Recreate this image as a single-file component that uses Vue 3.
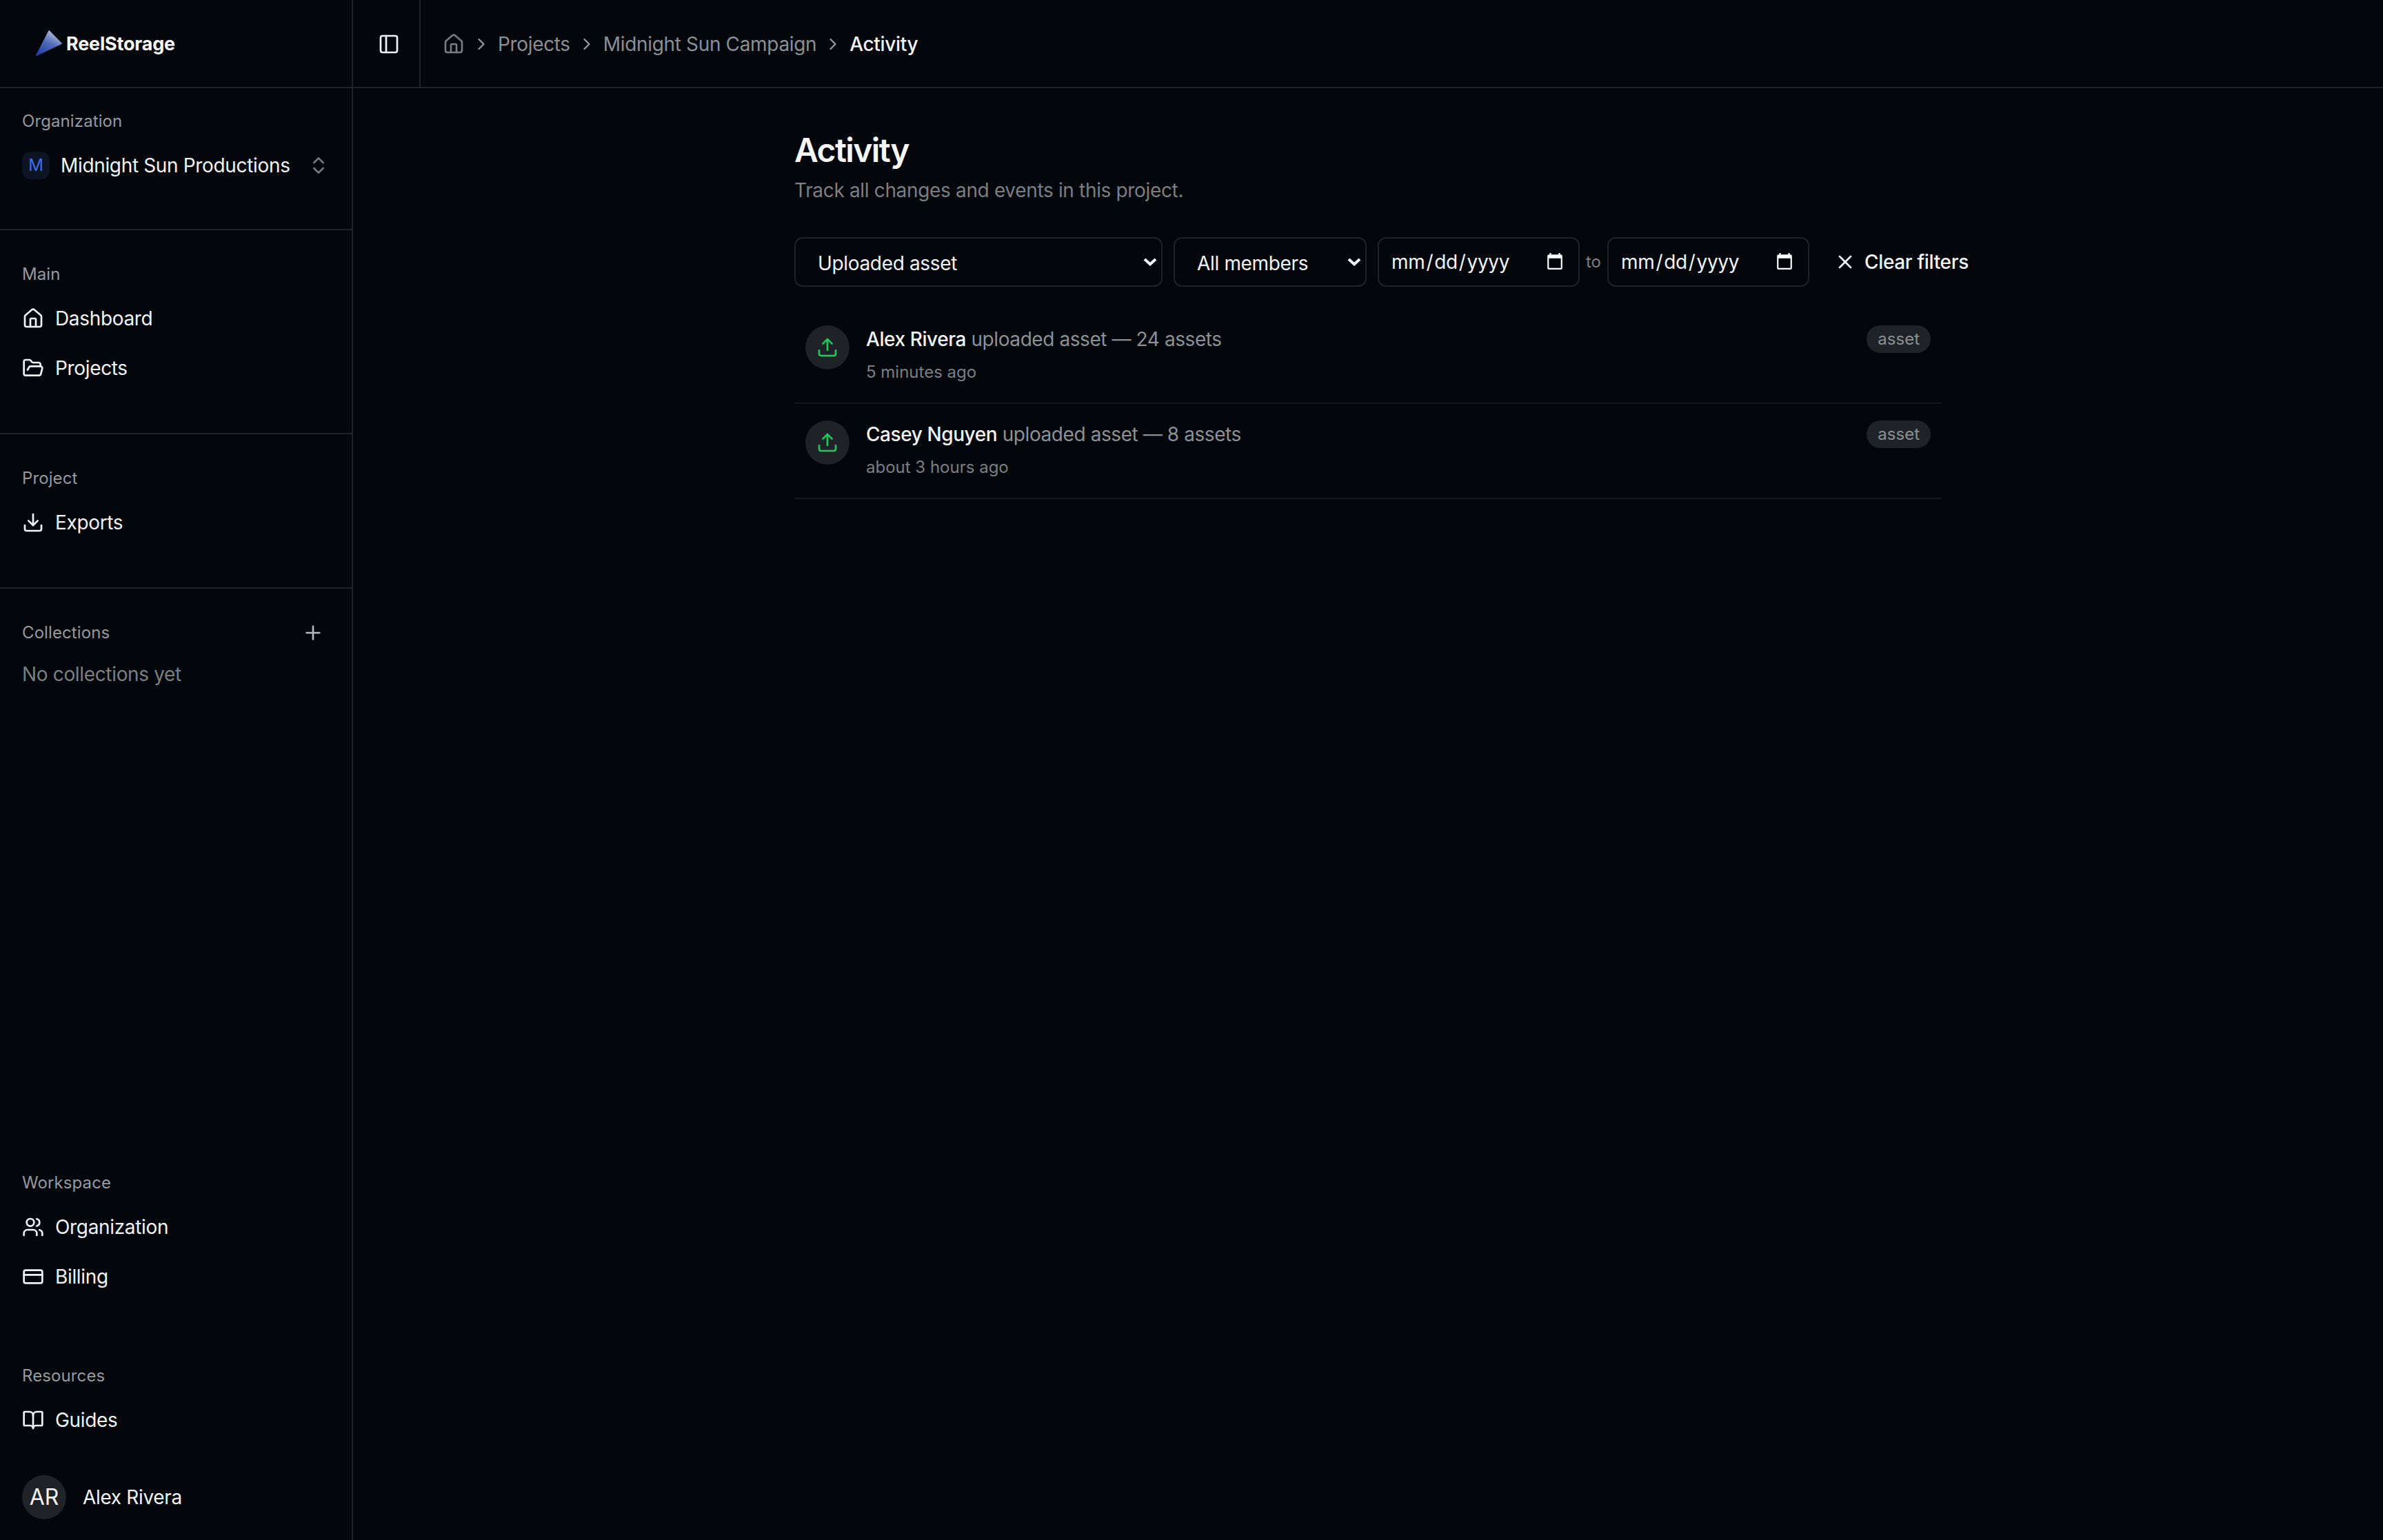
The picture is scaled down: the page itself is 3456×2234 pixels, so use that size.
<script setup>
const icons = {
  house: ['M15 21v-8a1 1 0 0 0-1-1h-4a1 1 0 0 0-1 1v8', 'M3 10a2 2 0 0 1 .709-1.528l7-5.999a2 2 0 0 1 2.582 0l7 5.999A2 2 0 0 1 21 10v9a2 2 0 0 1-2 2H5a2 2 0 0 1-2-2z'],
  folder: ['m6 14 1.5-2.9A2 2 0 0 1 9.24 10H20a2 2 0 0 1 1.94 2.5l-1.54 6a2 2 0 0 1-1.95 1.5H4a2 2 0 0 1-2-2V5a2 2 0 0 1 2-2h3.9a2 2 0 0 1 1.69.9l.81 1.2a2 2 0 0 0 1.67.9H18a2 2 0 0 1 2 2v2'],
  download: ['M12 15V3', 'M21 15v4a2 2 0 0 1-2 2H5a2 2 0 0 1-2-2v-4', 'm7 10 5 5 5-5'],
  upload: ['M12 3v12', 'm17 8-5-5-5 5', 'M21 15v4a2 2 0 0 1-2 2H5a2 2 0 0 1-2-2v-4'],
  users: ['M16 21v-2a4 4 0 0 0-4-4H6a4 4 0 0 0-4 4v2', 'M16 3.128a4 4 0 0 1 0 7.744', 'M22 21v-2a4 4 0 0 0-3-3.87', 'M5 7a4 4 0 1 0 8 0a4 4 0 1 0-8 0'],
  card: ['M4 5h16a2 2 0 0 1 2 2v10a2 2 0 0 1-2 2H4a2 2 0 0 1-2-2V7a2 2 0 0 1 2-2z', 'M2 10h20'],
  book: ['M12 7v14', 'M3 18a1 1 0 0 1-1-1V4a1 1 0 0 1 1-1h5a4 4 0 0 1 4 4 4 4 0 0 1 4-4h5a1 1 0 0 1 1 1v13a1 1 0 0 1-1 1h-6a3 3 0 0 0-3 3 3 3 0 0 0-3-3z'],
  plus: ['M5 12h14', 'M12 5v14'],
  panel: ['M5 3h14a2 2 0 0 1 2 2v14a2 2 0 0 1-2 2H5a2 2 0 0 1-2-2V5a2 2 0 0 1 2-2z', 'M9 3v18'],
  chevron: ['m9 18 6-6-6-6'],
  updown: ['m7 15 5 5 5-5', 'm7 9 5-5 5 5'],
  x: ['M18 6 6 18', 'm6 6 12 12'],
}

const topSections = [
  { label: 'Main', items: [{ icon: 'house', text: 'Dashboard' }, { icon: 'folder', text: 'Projects' }] },
  { label: 'Project', items: [{ icon: 'download', text: 'Exports' }] },
]
const bottomSections = [
  { label: 'Workspace', items: [{ icon: 'users', text: 'Organization' }, { icon: 'card', text: 'Billing' }] },
  { label: 'Resources', items: [{ icon: 'book', text: 'Guides' }] },
]
const crumbs = ['Projects', 'Midnight Sun Campaign']
const events = [
  { name: 'Alex Rivera', action: 'uploaded asset — 24 assets', time: '5 minutes ago' },
  { name: 'Casey Nguyen', action: 'uploaded asset — 8 assets', time: 'about 3 hours ago' },
]
</script>

<template>
  <div class="app">
    <aside class="sidebar">
      <div class="brand">
        <svg class="logo" viewBox="0 0 22 22">
          <defs>
            <linearGradient id="logoFill" x1="0.72" y1="0" x2="0.2" y2="1">
              <stop offset="0" stop-color="#b4c0de" />
              <stop offset="0.5" stop-color="#4f69b8" />
              <stop offset="1" stop-color="#2440a6" />
            </linearGradient>
          </defs>
          <polygon points="11.6,1.6 20.4,10.6 2.6,19" fill="url(#logoFill)" stroke="url(#logoFill)" stroke-width="1" stroke-linejoin="round" />
        </svg>
        <span class="brand-name">ReelStorage</span>
      </div>

      <section class="org-section">
        <div class="label">Organization</div>
        <div class="org-row">
          <span class="org-badge">M</span>
          <span class="org-name">Midnight Sun Productions</span>
          <svg class="icon updown" viewBox="0 0 24 24"><path v-for="d in icons.updown" :key="d" :d="d" /></svg>
        </div>
      </section>

      <section v-for="s in topSections" :key="s.label" class="nav-section">
        <div class="label">{{ s.label }}</div>
        <div class="nav-list">
          <a v-for="i in s.items" :key="i.text" class="nav-item">
            <svg class="icon" viewBox="0 0 24 24"><path v-for="d in icons[i.icon]" :key="d" :d="d" /></svg>
            {{ i.text }}
          </a>
        </div>
      </section>

      <section class="collections">
        <div class="collections-head">
          <div class="label">Collections</div>
          <svg class="icon plus" viewBox="0 0 24 24"><path v-for="d in icons.plus" :key="d" :d="d" /></svg>
        </div>
        <div class="empty">No collections yet</div>
      </section>

      <section v-for="s in bottomSections" :key="s.label" class="foot-section">
        <div class="label">{{ s.label }}</div>
        <div class="nav-list">
          <a v-for="i in s.items" :key="i.text" class="nav-item">
            <svg class="icon" viewBox="0 0 24 24"><path v-for="d in icons[i.icon]" :key="d" :d="d" /></svg>
            {{ i.text }}
          </a>
        </div>
      </section>

      <div class="user">
        <span class="avatar">AR</span>
        <span class="user-name">Alex Rivera</span>
      </div>
    </aside>

    <div class="main">
      <header class="topbar">
        <button class="toggle">
          <svg class="icon" viewBox="0 0 24 24"><path v-for="d in icons.panel" :key="d" :d="d" /></svg>
        </button>
        <nav class="crumbs">
          <svg class="icon home" viewBox="0 0 24 24"><path v-for="d in icons.house" :key="d" :d="d" /></svg>
          <template v-for="c in crumbs" :key="c">
            <svg class="icon sep" viewBox="0 0 24 24"><path v-for="d in icons.chevron" :key="d" :d="d" /></svg>
            <span>{{ c }}</span>
          </template>
          <svg class="icon sep" viewBox="0 0 24 24"><path v-for="d in icons.chevron" :key="d" :d="d" /></svg>
          <span class="current">Activity</span>
        </nav>
      </header>

      <main class="content">
        <h1>Activity</h1>
        <p class="sub">Track all changes and events in this project.</p>

        <div class="filters">
          <select class="field sel-type">
            <option>Uploaded asset</option>
          </select>
          <select class="field sel-member">
            <option>All members</option>
          </select>
          <input class="field date" type="date" />
          <span class="to">to</span>
          <input class="field date" type="date" />
          <button class="clear">
            <svg class="icon" viewBox="0 0 24 24"><path v-for="d in icons.x" :key="d" :d="d" /></svg>
            Clear filters
          </button>
        </div>

        <ul class="events">
          <li v-for="e in events" :key="e.name" class="event">
            <span class="event-icon">
              <svg class="icon" viewBox="0 0 24 24"><path v-for="d in icons.upload" :key="d" :d="d" /></svg>
            </span>
            <div class="event-body">
              <div class="event-title"><strong>{{ e.name }}</strong> {{ e.action }}</div>
              <div class="event-time">{{ e.time }}</div>
            </div>
            <span class="tag">asset</span>
          </li>
        </ul>
      </main>
    </div>
  </div>
</template>

<style>
html, body { margin: 0; background: #03060a; }
</style>

<style scoped>
.app {
  zoom: 2;
  display: flex;
  height: 1117px;
  overflow: hidden;
  background: #03060a;
  color: #f1f3f6;
  font-family: Inter, "Liberation Sans", sans-serif;
  font-size: 14px;
  line-height: 20px;
  letter-spacing: -0.17px;
  color-scheme: dark;
}
.icon {
  width: 16px;
  height: 16px;
  flex: none;
  fill: none;
  stroke: currentColor;
  stroke-width: 2;
  stroke-linecap: round;
  stroke-linejoin: round;
}
.sidebar {
  width: 256px;
  flex: none;
  box-sizing: border-box;
  display: flex;
  flex-direction: column;
  border-right: 1px solid #1f2328;
}
.brand {
  height: 64px;
  flex: none;
  box-sizing: border-box;
  display: flex;
  align-items: center;
  padding: 1px 0 0 24px;
  gap: 2px;
  border-bottom: 1px solid #1f2328;
}
.logo { width: 22px; height: 22px; flex: none; }
.brand-name { font-size: 13.5px; font-weight: 700; letter-spacing: -0.1px; color: #f8f9fb; }
.label {
  font-size: 12px;
  line-height: 16px;
  font-weight: 400;
  letter-spacing: 0.05px;
  color: #96999e;
}
.org-section {
  height: 103px;
  flex: none;
  box-sizing: border-box;
  padding: 16px 16px 0;
  border-bottom: 1px solid #1f2328;
}
.org-row {
  display: flex;
  align-items: center;
  gap: 8px;
  margin-top: 14px;
  height: 20px;
}
.org-badge {
  width: 20px;
  height: 20px;
  flex: none;
  border-radius: 6px;
  background: #0c1424;
  color: #3f6fe6;
  font-size: 12px;
  letter-spacing: 0;
  display: flex;
  align-items: center;
  justify-content: center;
}
.org-name { flex: 1; white-space: nowrap; }
.updown { color: #777a80; }
.nav-section {
  padding: 24px 16px 31px;
  border-bottom: 1px solid #1f2328;
}
.nav-list {
  display: flex;
  flex-direction: column;
  gap: 4px;
  margin-top: 8px;
}
.nav-item {
  height: 32px;
  display: flex;
  align-items: center;
  gap: 8px;
}
.collections {
  padding: 24px 16px 0;
  flex: 1;
}
.collections-head {
  display: flex;
  align-items: center;
  justify-content: space-between;
  height: 16px;
}
.plus { color: #b5b8bc; margin-right: 4px; }
.empty { margin-top: 12px; color: #7b7f84; }
.foot-section { padding: 0 16px 24px; }
.foot-section + .foot-section { padding-top: 24px; padding-bottom: 0; }
.user {
  display: flex;
  align-items: center;
  gap: 12px;
  padding: 24px 16px 15px;
}
.avatar {
  width: 32px;
  height: 32px;
  border-radius: 50%;
  background: #1f2328;
  display: flex;
  align-items: center;
  justify-content: center;
  font-size: 16px;
  letter-spacing: 0;
}
.main { flex: 1; min-width: 0; display: flex; flex-direction: column; }
.topbar {
  height: 64px;
  flex: none;
  box-sizing: border-box;
  display: flex;
  align-items: center;
  border-bottom: 1px solid #1f2328;
}
.toggle {
  width: 49px;
  height: 63px;
  box-sizing: border-box;
  padding: 1px 0 0 4px;
  border: 0;
  border-right: 1px solid #1f2328;
  background: none;
  color: #f1f3f6;
  display: flex;
  align-items: center;
  justify-content: center;
}
.crumbs {
  display: flex;
  align-items: center;
  gap: 5px;
  padding: 1px 0 0 16px;
  color: #8b8f94;
}
.home { color: #777b80; }
.sep { width: 14px; height: 14px; color: #94979c; }
.current { color: #f1f3f6; font-weight: 500; }
.content {
  width: 832px;
  align-self: center;
  padding-top: 29px;
}
h1 {
  margin: 0;
  font-size: 24px;
  line-height: 32px;
  font-weight: 600;
  letter-spacing: -0.8px;
  color: #f4f6f8;
}
.sub { margin: 3px 0 0; color: #7b7f84; }
.filters {
  display: flex;
  align-items: center;
  flex-wrap: nowrap;
  gap: 8px;
  margin-top: 24px;
}
.field {
  height: 36px;
  box-sizing: border-box;
  flex: none;
  background: transparent;
  border: 1px solid #1f2328;
  border-radius: 6px;
  color: #f1f3f6;
  font: inherit;
  font-size: 14px;
  letter-spacing: -0.17px;
}
select.field {
  appearance: none;
  padding: 2px 0 0 16px;
  background-image: url("data:image/svg+xml,%3Csvg xmlns='http://www.w3.org/2000/svg' width='10' height='6' viewBox='0 0 10 6'%3E%3Cpath d='M1 1l4 3.6L9 1' fill='none' stroke='%23f1f3f6' stroke-width='2'/%3E%3C/svg%3E");
  background-repeat: no-repeat;
  background-position: right 3px center;
}
.sel-type { width: 267px; }
.sel-member { width: 140px; }
.date { width: 146.5px; padding: 0 8px; }
.to { color: #7b7f84; font-size: 12px; flex: none; letter-spacing: 0; margin: 0 -3.5px; }
.clear {
  flex: none;
  height: 36px;
  padding: 0 10px;
  display: flex;
  align-items: center;
  gap: 6px;
  border: 0;
  background: none;
  color: #f1f3f6;
  font: inherit;
  font-weight: 500;
  letter-spacing: -0.17px;
  white-space: nowrap;
}
.events { list-style: none; margin: 16px 0 0; padding: 0; }
.event {
  display: flex;
  align-items: flex-start;
  gap: 12px;
  padding: 12px 8px;
  border-bottom: 1px solid #14181c;
}
.event-icon {
  width: 32px;
  height: 32px;
  flex: none;
  border-radius: 50%;
  background: #1f2328;
  color: #22c55e;
  display: flex;
  align-items: center;
  justify-content: center;
}
.event-body { flex: 1; min-width: 0; }
.event-title { color: #8d9195; letter-spacing: -0.21px; }
.event-title strong { color: #f1f3f6; font-weight: 500; }
.event-time { margin-top: 4px; font-size: 12px; letter-spacing: 0; color: #7b7f84; }
.tag {
  flex: none;
  height: 20px;
  padding: 0 8px;
  border-radius: 999px;
  background: #1f2328;
  color: #8b8f93;
  font-size: 12px;
  letter-spacing: 0;
  line-height: 20px;
}
</style>
